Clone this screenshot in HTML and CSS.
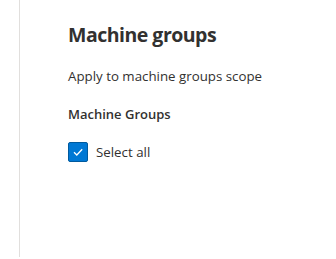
FILE: index.html
```html
<!DOCTYPE html>
<html>
<head>
<meta charset="utf-8">
<link rel="stylesheet" href="styles.css">
</head>
<body>
<div class="page">
  <div class="panel">
    <h1 class="title">Machine groups</h1>
    <p class="desc">Apply to machine groups scope</p>
    <div class="label">Machine Groups</div>
    <label class="check">
      <span class="box">
        <svg width="12" height="12" viewBox="0 0 12 12"><path d="M2 6.3 L4.8 9 L10.2 3.2" fill="none" stroke="#fff" stroke-width="1.3"/></svg>
      </span>
      <span class="check-text">Select all</span>
    </label>
  </div>
</div>
</body>
</html>
```

FILE: styles.css
```css
html, body {
  margin: 0;
  padding: 0;
  background: #fff;
}
body {
  font-family: "Open Sans", "Noto Sans", sans-serif;
  color: #323130;
}
.page {
  width: 336px;
  height: 259px;
  box-sizing: border-box;
  padding: 0 0 2px 19px;
}
.panel {
  height: 100%;
  border-left: 1px solid #e1dfdd;
  padding: 21px 0 0 48px;
  box-sizing: border-box;
}
.title {
  margin: 0;
  font-size: 19.5px;
  font-weight: 700;
  letter-spacing: -0.5px;
  line-height: 28px;
  color: #323130;
}
.desc {
  margin: 17px 0 0;
  font-size: 13.3px;
  line-height: 20px;
  color: #323130;
}
.label {
  margin-top: 18px;
  font-size: 13px;
  font-weight: 600;
  line-height: 20px;
}
.check {
  margin-top: 18px;
  display: flex;
  align-items: center;
  gap: 8px;
}
.box {
  width: 20px;
  height: 20px;
  box-sizing: border-box;
  background: #0078d4;
  border: 1px solid #005a9e;
  border-radius: 2px;
  display: flex;
  align-items: center;
  justify-content: center;
}
.check-text {
  font-size: 13.3px;
  line-height: 20px;
}
```
